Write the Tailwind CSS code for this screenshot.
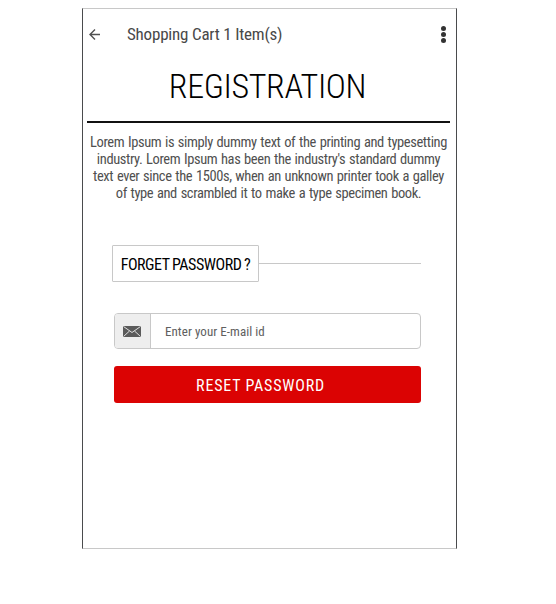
<!DOCTYPE html>
<html lang="en">
<head>
<meta charset="utf-8">
<title>Registration</title>
<script src="https://cdn.jsdelivr.net/npm/@tailwindcss/browser@4"></script>
</head>
<body class="bg-white pt-2 pl-[82px] font-['Roboto_Condensed',Roboto,sans-serif] [font-stretch:75%]">
<main class="flex h-[541px] w-[375px] flex-col border border-x-[#4a4b4d] border-y-[#c8c8c8]">
  <header class="flex h-[50px] items-center pl-1.5 pr-2.5">
    <svg class="mt-px h-3 w-3" viewBox="0 0 12 12" fill="none" stroke="#505050" stroke-width="1.4"><path d="M11 5.500H1M6 .5L1 5.500l5 5"/></svg>
    <span class="ml-[26px] whitespace-nowrap text-[17px] font-normal leading-5 tracking-[-.2px] text-[#484848]">Shopping Cart 1 Item(s)</span>
    <svg class="ml-auto h-[18px] w-[6px]" viewBox="0 0 6 18" fill="#333"><circle cx="3.5" cy="3.500" r="2.5"/><circle cx="3.5" cy="9.500" r="2.5"/><circle cx="3.5" cy="15.500" r="2.5"/></svg>
  </header>
  <h1 class="mt-[7px] whitespace-nowrap pr-[4px] text-center text-[34px] font-light leading-10 tracking-[-.36px] text-black">REGISTRATION</h1>
  <hr class="ml-1 mt-[15px] w-[363px] border-t-2 border-[#111]">
  <p class="mt-[11px] whitespace-nowrap pr-[2px] text-center text-[14.5px] leading-[17px] tracking-[-.4px] text-[#505050] [word-spacing:.8px]">Lorem Ipsum is simply dummy text of the printing and typesetting<br>industry. Lorem Ipsum has been the industry's standard dummy<br>text ever since the 1500s, when an unknown printer took a galley<br>of type and scrambled it to make a type specimen book.</p>
  <div class="ml-[29px] mt-[43px] flex w-[309px] items-center">
    <h2 class="flex h-[37px] w-[147px] items-center justify-center whitespace-nowrap rounded-[1px] border border-[#c8c8c8] pt-[2px] text-[16px] tracking-[-.45px] text-black [word-spacing:-.6px]">FORGET PASSWORD ?</h2>
    <div class="h-px flex-1 bg-[#c8c8c8]"></div>
  </div>
  <form class="ml-[31px] mt-[31px] w-[307px]">
    <label class="flex h-9 overflow-hidden rounded border border-[#c8c8c8]">
      <span class="flex w-9 items-center justify-center border-r border-[#c8c8c8] bg-[#eee] pr-px pt-px">
        <svg class="h-[11px] w-[18px]" viewBox="0 0 18 11"><rect width="18" height="11" rx=".5" fill="#5b5b5b"/><path d="M.5.5L9 6.500l8.500-6M.5 10.500L6.500 5M17.500 10.500L11.500 5" fill="none" stroke="#eee" stroke-width=".9"/></svg>
      </span>
      <input class="min-w-0 flex-1 pl-3.5 pt-[2px] text-[13px] tracking-[.05px] placeholder:text-[#606060] placeholder:opacity-100" placeholder="Enter your E-mail id">
    </label>
    <button type="button" class="mt-[17px] block h-[37px] w-full whitespace-nowrap rounded-[3px] bg-[#db0303] pr-[14px] pt-[2px] text-[16px] tracking-[.8px] text-white">RESET PASSWORD</button>
  </form>
</main>
</body>
</html>
